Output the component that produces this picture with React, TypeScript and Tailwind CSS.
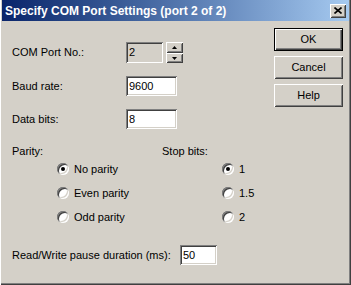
const raised =
  'shadow-[inset_1px_1px_#ffffff,inset_-1px_-1px_#404040,inset_2px_2px_#d4d0c8,inset_-2px_-2px_#808080]';
const sunken =
  'shadow-[inset_1px_1px_#808080,inset_-1px_-1px_#ffffff,inset_2px_2px_#404040,inset_-2px_-2px_#d4d0c8]';

function Field({ value, width, height, disabled }: { value: string; width: string; height: string; disabled?: boolean }) {
  return (
    <div className={`${width} ${height} ${sunken} ${disabled ? 'bg-[#d4d0c8]' : 'bg-white'} flex items-center pl-[3px]`}>
      {value}
    </div>
  );
}

function Button({ label, isDefault }: { label: string; isDefault?: boolean }) {
  return (
    <div
      className={`w-[69px] h-[23px] flex items-center justify-center bg-[#d4d0c8] ${
        isDefault
          ? 'shadow-[inset_0_0_0_1px_#000000,inset_2px_2px_#ffffff,inset_-2px_-2px_#404040,inset_-3px_-3px_#808080]'
          : raised
      }`}
    >
      {label}
    </div>
  );
}

function Radio({ label, checked }: { label: string; checked?: boolean }) {
  return (
    <div className="flex items-center h-[14px]">
      <div className="w-[12px] h-[12px] rounded-full bg-white flex items-center justify-center shadow-[inset_1px_1px_#808080,inset_-1px_-1px_#ffffff,inset_2px_2px_#404040,inset_-2px_-2px_#d4d0c8]">
        {checked && <div className="w-[4px] h-[4px] rounded-full bg-black" />}
      </div>
      <span className="ml-[5px]">{label}</span>
    </div>
  );
}

function SpinArrow({ up }: { up?: boolean }) {
  return (
    <svg width="5" height="3" viewBox="0 0 5 3">
      <path d={up ? 'M2.5 0 L5 3 L0 3 Z' : 'M0 0 L5 0 L2.5 3 Z'} fill="#000" />
    </svg>
  );
}

export default function App() {
  return (
    <div className="w-[351px] h-[285px] bg-[#d4d0c8] pl-[2px] pr-[2px] pb-[2px] flex flex-col text-[11px] leading-[13px] text-black font-['Liberation_Sans',Arial,sans-serif] shadow-[inset_1px_0_#ffffff,inset_-1px_-1px_#404040,inset_-2px_-2px_#808080]">
      {/* Title bar */}
      <div className="h-[21px] shrink-0 flex items-center justify-between pl-[3px] pr-[3px] bg-gradient-to-r from-[#0a246a] to-[#a6caf0]">
        <span className="text-white font-bold text-[12px] leading-[14px]">Specify COM Port Settings (port 2 of 2)</span>
        <div className={`w-[16px] h-[14px] bg-[#d4d0c8] flex items-center justify-center ${raised}`}>
          <svg width="8" height="7" viewBox="0 0 8 7">
            <path d="M0.5 0.5 L7.5 6.5 M7.5 0.5 L0.5 6.5" stroke="#000" strokeWidth="1.6" />
          </svg>
        </div>
      </div>

      {/* Body */}
      <div className="flex-1 flex flex-col">
        <div className="flex">
          <div className="flex-1 flex flex-col pl-[10px] pt-[21px]">
            <div className="flex items-center">
              <span className="w-[114px]">COM Port No.:</span>
              <Field value="2" width="w-[37px]" height="h-[21px]" disabled />
              <div className="ml-[3px] flex flex-col">
                <div className={`w-[17px] h-[11px] flex items-center justify-center ${raised}`}>
                  <SpinArrow up />
                </div>
                <div className={`w-[17px] h-[10px] flex items-center justify-center ${raised}`}>
                  <SpinArrow />
                </div>
              </div>
            </div>
            <div className="flex items-center mt-[13px]">
              <span className="w-[114px]">Baud rate:</span>
              <Field value="9600" width="w-[51px]" height="h-[20px]" />
            </div>
            <div className="flex items-center mt-[13px]">
              <span className="w-[114px]">Data bits:</span>
              <Field value="8" width="w-[51px]" height="h-[20px]" />
            </div>
          </div>
          <div className="flex flex-col gap-[5px] pt-[7px] mr-[6px]">
            <Button label="OK" isDefault />
            <Button label="Cancel" />
            <Button label="Help" />
          </div>
        </div>

        {/* Parity / stop bits */}
        <div className="flex pl-[10px] mt-[16px]">
          <div className="w-[150px] flex flex-col">
            <span className="h-[13px]">Parity:</span>
            <div className="flex flex-col gap-[10px] mt-[4px] pl-[45px]">
              <Radio label="No parity" checked />
              <Radio label="Even parity" />
              <Radio label="Odd parity" />
            </div>
          </div>
          <div className="flex flex-col">
            <span className="h-[13px]">Stop bits:</span>
            <div className="flex flex-col gap-[10px] mt-[4px] pl-[60px]">
              <Radio label="1" checked />
              <Radio label="1.5" />
              <Radio label="2" />
            </div>
          </div>
        </div>

        <div className="flex items-center pl-[10px] mt-[21px]">
          <span className="w-[168px]">Read/Write pause duration (ms):</span>
          <Field value="50" width="w-[37px]" height="h-[20px]" />
        </div>
      </div>
    </div>
  );
}
